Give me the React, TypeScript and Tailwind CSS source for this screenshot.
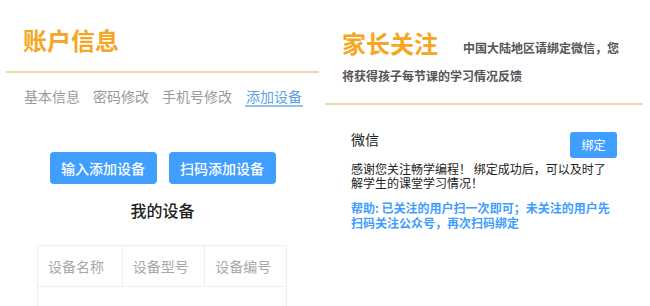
import React from "react";

const font = { fontFamily: '"Noto Sans CJK SC", "Noto Sans", sans-serif' };

const tabs = ["基本信息", "密码修改", "手机号修改", "添加设备"];
const columns = ["设备名称", "设备型号", "设备编号"];

function AccountPanel() {
  return (
    <div className="w-[325px] shrink-0">
      <h1 className="pl-[23px] pt-6 text-[24px] font-bold leading-[32px] text-[#f5a623]">
        账户信息
      </h1>
      <div className="mx-[6px] mt-[15px] border-b-2 border-[#ead9aa]" />

      <div className="mt-[14px] flex gap-[13px] pl-[24px] text-[14px] leading-[18px] text-[#9a9a9a]">
        {tabs.map((t, i) =>
          i === tabs.length - 1 ? (
            <span key={t} className="border-b-2 border-[#94bfea] px-[1px] text-[#5ba3e6]">
              {t}
            </span>
          ) : (
            <span key={t}>{t}</span>
          )
        )}
      </div>

      <div className="mt-[45px] flex justify-center gap-3">
        <button className="h-8 w-[107px] rounded-[4px] bg-[#409eff] text-[14px] font-medium text-white">
          输入添加设备
        </button>
        <button className="h-8 w-[107px] rounded-[4px] bg-[#409eff] text-[14px] font-medium text-white">
          扫码添加设备
        </button>
      </div>

      <h2 className="mt-[14px] text-center text-[16px] font-medium leading-[24px] text-[#222]">
        我的设备
      </h2>

      <div className="ml-[37px] mt-[23px] w-[250px] border-l border-t border-[#ebeef5]">
        <div className="flex">
          {columns.map((c, i) => (
            <div
              key={c}
              className={`h-[41px] border-b border-r border-[#ebeef5] pl-[10px] text-[14px] leading-[40px] text-[#a8a8a8] ${
                i === 0 ? "w-[85px]" : i === 1 ? "w-[83px]" : "w-[82px]"
              }`}
            >
              {c}
            </div>
          ))}
        </div>
        <div className="h-10 border-r border-[#ebeef5]" />
      </div>
    </div>
  );
}

function ParentPanel() {
  return (
    <div className="w-[325px] shrink-0">
      <div className="pl-[17px] pr-[24px] pt-[29px] text-[12px] font-bold leading-[28px] text-[#555]">
        <span className="text-[24px] font-bold leading-[28px] text-[#f5a623]">家长关注</span>
        <span className="ml-[25px]">中国大陆地区请绑定微信，您将获得孩子每节课的学习情况反馈</span>
      </div>
      <div className="mr-[7px] mt-[13px] border-b-2 border-[#ead9aa]" />

      <div className="ml-[26px] mt-[24px] w-[266px]">
        <div className="flex items-start justify-between">
          <span className="text-[14px] leading-[20px] text-[#222]">微信</span>
          <button className="mt-[3px] h-[26px] w-[47px] rounded-[3px] bg-[#409eff] text-[12px] text-white">
            绑定
          </button>
        </div>
        <p className="mt-[4px] text-[12px] leading-[14px] text-[#222]">
          感谢您关注畅学编程！ 绑定成功后，可以及时了解学生的课堂学习情况！
        </p>
        <p className="mt-[10px] text-[12px] font-bold leading-[15px] text-[#409eff]">
          帮助: 已关注的用户扫一次即可；未关注的用户先扫码关注公众号，再次扫码绑定
        </p>
      </div>
    </div>
  );
}

export default function App() {
  return (
    <div className="flex h-[306px] w-[650px] overflow-hidden bg-white" style={font}>
      <AccountPanel />
      <ParentPanel />
    </div>
  );
}
